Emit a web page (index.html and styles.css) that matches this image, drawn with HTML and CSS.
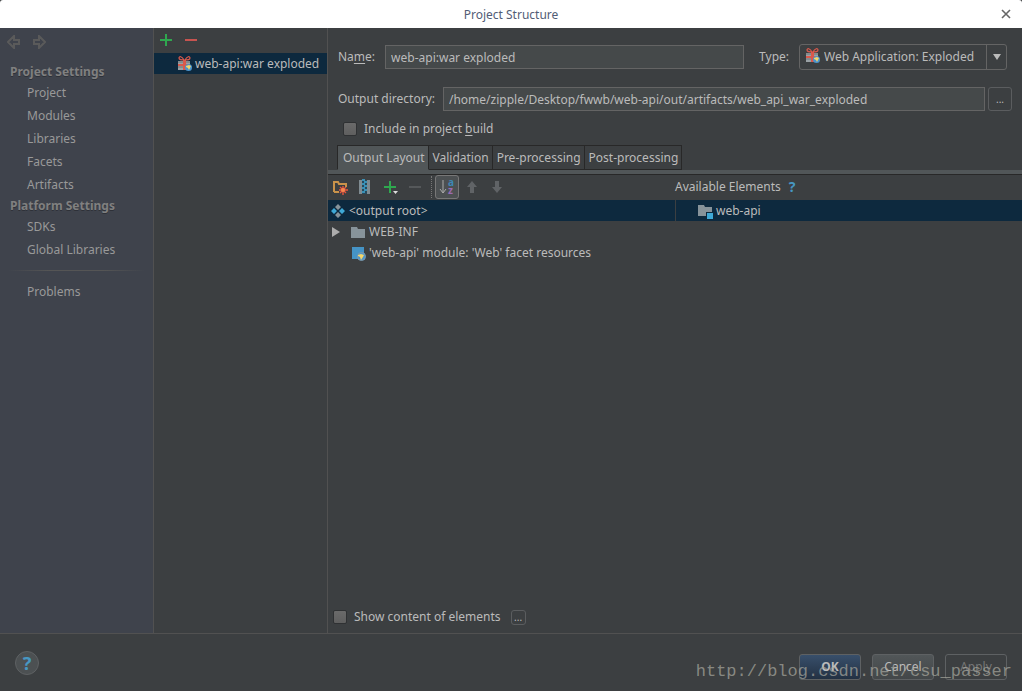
FILE: index.html
```
<!DOCTYPE html>
<html lang="en">
<head>
    <meta charset="UTF-8">
    <meta name="viewport" content="width=device-width, initial-scale=1.0">
    <title>Project Structure</title>
    <link rel="stylesheet" href="styles.css">
</head>
<body>
    <!-- shared icons -->
    <svg class="sprite" width="0" height="0" aria-hidden="true">
        <symbol id="icon-artifact" viewBox="0 0 16 16">
            <path d="M1 5h5v4H1zM9 5h4v4H9zM1 10h5v4H1z" fill="#9aa1a5"/>
            <path d="M1 6h12M1 11h6" stroke="#6e7477"/>
            <path d="M6 4h3v10H6zM1 8h12v2H1z" fill="#d9594c"/>
            <path d="M7 4C5 0 2 0 2 2s2 2 5 2zM8 4c2-4 5-4 5-2s-2 2-5 2z" fill="none" stroke="#d9594c" stroke-width="1.2"/>
            <circle cx="11.500" cy="11.500" r="3.500" fill="#4a94cd"/>
            <path d="M9 10l3-1 2 1-1 2-1 2-1-2-2-1z" fill="#f4d56a"/>
        </symbol>
        <symbol id="icon-plus" viewBox="0 0 16 16">
            <path d="M7 2h2v5h5v2H9v5H7V9H2V7h5z" fill="#2fa84f"/>
        </symbol>
    </svg>

    <header class="titlebar">
        <h1>Project Structure</h1>
        <button class="close" aria-label="Close">
            <svg width="10" height="10" viewBox="0 0 10 10"><path d="M1 1l8 8M9 1L1 9" stroke="#666" stroke-width="1.6"/></svg>
        </button>
    </header>

    <div class="content">
        <nav class="sidebar">
            <div class="history">
                <button aria-label="Back"><svg width="14" height="14" viewBox="0 0 14 14"><path d="M7 1L1 7l6 6V9h5V5H7z"/></svg></button>
                <button aria-label="Forward"><svg width="14" height="14" viewBox="0 0 14 14"><path d="M7 1l6 6-6 6V9H2V5h5z"/></svg></button>
            </div>
            <h2>Project Settings</h2>
            <a href="#">Project</a>
            <a href="#">Modules</a>
            <a href="#">Libraries</a>
            <a href="#">Facets</a>
            <a href="#">Artifacts</a>
            <h2>Platform Settings</h2>
            <a href="#">SDKs</a>
            <a href="#">Global Libraries</a>
            <div class="separator"></div>
            <a href="#">Problems</a>
        </nav>

        <section class="artifacts">
            <div class="artifacts-toolbar">
                <button aria-label="Add"><svg width="16" height="16"><use href="#icon-plus"/></svg></button>
                <button aria-label="Remove"><svg width="16" height="16" viewBox="0 0 16 16"><path d="M2 7h12v2H2z" fill="#c75450"/></svg></button>
            </div>
            <ul>
                <li class="artifact selected"><svg width="16" height="16"><use href="#icon-artifact"/></svg>web-api:war exploded</li>
            </ul>
        </section>

        <main class="editor">
            <div class="form-row name-row">
                <label for="name">Na<u>m</u>e:</label>
                <input type="text" id="name" value="web-api:war exploded">
                <label for="type" class="type-label">Type:</label>
                <div class="combo">
                    <svg class="combo-icon" width="16" height="16"><use href="#icon-artifact"/></svg>
                    <select id="type">
                        <option>Web Application: Exploded</option>
                    </select>
                    <span class="combo-arrow"><svg width="8" height="6" viewBox="0 0 8 6"><path d="M0 0h8L4 6z" fill="#bbb"/></svg></span>
                </div>
            </div>
            <div class="form-row dir-row">
                <label for="dir">Output directory:</label>
                <input type="text" id="dir" value="/home/zipple/Desktop/fwwb/web-api/out/artifacts/web_api_war_exploded">
                <button class="more" aria-label="Browse">...</button>
            </div>
            <label class="check build-check"><input type="checkbox"><span>Include in project <u>b</u>uild</span></label>

            <div class="tabs" role="tablist">
                <button role="tab" class="active" aria-selected="true">Output Layout</button>
                <button role="tab">Validation</button>
                <button role="tab">Pre-processing</button>
                <button role="tab">Post-processing</button>
            </div>

            <div class="panes-header">
                <div class="layout-toolbar">
                    <button aria-label="Create directory">
                        <svg width="16" height="16" viewBox="0 0 16 16">
                            <path d="M2 13V3h4l1 2h7v3" fill="none" stroke="#c9924a" stroke-width="2"/>
                            <path d="M2 13h5" stroke="#c9924a" stroke-width="2"/>
                            <path d="M11 7v9M7 11h9M8 8l6 6M14 8l-6 6" stroke="#e8553e" stroke-width="1.4"/>
                            <circle cx="11" cy="11" r="2" fill="#f58a4e"/>
                        </svg>
                    </button>
                    <button aria-label="Create archive">
                        <svg width="16" height="16" viewBox="0 0 16 16">
                            <path d="M2 1h4v14H2zM9 1h4v14H9z" fill="#7f8b91"/>
                            <path d="M5 1h5v14H5z" fill="#28485a"/>
                            <path d="M5 1h3M7 3h3M5 5h3M7 7h3M5 9h3M7 11h3M5 13h3" stroke="#3fa9d6" stroke-width="1.4"/>
                        </svg>
                    </button>
                    <button aria-label="Add copy of">
                        <svg width="16" height="16" viewBox="0 0 16 16">
                            <path d="M7 2h2v5h5v2H9v5H7V9H2V7h5z" fill="#2fa84f"/>
                            <path d="M11 12h5l-2.500 3z" fill="#ddd"/>
                        </svg>
                    </button>
                    <button aria-label="Remove"><svg width="16" height="16" viewBox="0 0 16 16"><path d="M2 7h12v2H2z" fill="#55585a"/></svg></button>
                    <span class="divider"></span>
                    <button class="pressed" aria-label="Sort by names and types">
                        <svg width="16" height="20" viewBox="0 0 16 20">
                            <path d="M4 3v13M1 12l3 4 3-4" fill="none" stroke="#aaa"/>
                            <text x="9" y="9" fill="#3d87b5">a</text>
                            <text x="9" y="17" fill="#9a6bb3">z</text>
                        </svg>
                    </button>
                    <button aria-label="Move up"><svg width="16" height="16" viewBox="0 0 16 16"><path d="M8 2l5 6h-3v6H6V8H3z" fill="#606366"/></svg></button>
                    <button aria-label="Move down"><svg width="16" height="16" viewBox="0 0 16 16"><path d="M8 14l5-6h-3V2H6v6H3z" fill="#606366"/></svg></button>
                </div>
                <div class="available-title">
                    Available Elements
                    <button class="hint">?</button>
                </div>
            </div>

            <div class="panes">
                <ul class="tree">
                    <li class="selected root">
                        <svg width="16" height="16" viewBox="0 0 16 16">
                            <path d="M8 1l3 3-3 3-3-3zM8 9l3 3-3 3-3-3z" fill="#87939a"/>
                            <path d="M4 5l3 3-3 3-3-3zM12 5l3 3-3 3-3-3z" fill="#3fa9d6"/>
                        </svg>
                        &lt;output root&gt;
                    </li>
                    <li class="folder">
                        <button aria-label="Expand"><svg width="8" height="10" viewBox="0 0 8 10"><path d="M0 0l8 5-8 5z" fill="#adadad"/></svg></button>
                        <svg width="16" height="16" viewBox="0 0 16 16"><path d="M1 3h6l1 2h7v9H1z" fill="#87939a"/></svg>
                        WEB-INF
                    </li>
                    <li class="facet">
                        <svg width="16" height="16" viewBox="0 0 16 16">
                            <path d="M2 2h12v12H2z" fill="#4593c5"/>
                            <circle cx="11.500" cy="11.500" r="4" fill="#4a94cd" stroke="#7f98a8"/>
                            <path d="M8 10l3-1 3 1-1 2-2 3-1-3-2-1z" fill="#f4d56a"/>
                        </svg>
                        'web-api' module: 'Web' facet resources
                    </li>
                </ul>
                <ul class="tree available">
                    <li class="selected">
                        <svg width="16" height="16" viewBox="0 0 16 16">
                            <path d="M1 2h6l1 2h7v9H1z" fill="#87939a"/>
                            <path d="M9 9h7v7H9z" fill="#0d293e"/>
                            <path d="M10 10h6v6h-6z" fill="#3fa9d6"/>
                        </svg>
                        web-api
                    </li>
                </ul>
            </div>

            <div class="show-row">
                <label class="check"><input type="checkbox"><span>Show content of elements</span></label>
                <button class="more small" aria-label="Options">...</button>
            </div>
        </main>
    </div>

    <footer class="footer">
        <button class="help">?</button>
        <div class="actions">
            <button class="btn primary">OK</button>
            <button class="btn">Cancel</button>
            <button class="btn" disabled>Apply</button>
        </div>
        <span class="watermark">http://blog.csdn.net/csu_passer</span>
    </footer>
</body>
</html>
```
FILE: styles.css
```
* {
    box-sizing: border-box;
}

body {
    margin: 0;
    height: 100vh;
    display: flex;
    flex-direction: column;
    overflow: hidden;
    background: #3c3f41;
    color: #bbb;
    font-family: "Noto Sans", sans-serif;
    font-size: 12px;
    line-height: 20px;
}

h1,
h2,
ul {
    margin: 0;
    padding: 0;
    list-style: none;
}

button,
input,
select {
    margin: 0;
    padding: 0;
    border: 0;
    background: none;
    color: inherit;
    font: inherit;
}

svg {
    display: block;
    flex: none;
}

u {
    text-underline-offset: 2px;
}

.sprite {
    position: absolute;
}

/* title bar */
.titlebar {
    height: 28px;
    flex: none;
    display: grid;
    grid-template-columns: 1fr auto 1fr;
    align-items: center;
    background: #fff;
    border-radius: 3px 3px 0 0;
}

.titlebar h1 {
    grid-column: 2;
    padding-top: 1px;
    font-size: 12px;
    font-weight: normal;
    color: #525d76;
}

.close {
    justify-self: end;
    padding: 0 11px;
}

.content {
    flex: 1;
    min-height: 0;
    display: flex;
}

/* left navigation */
.sidebar {
    width: 154px;
    flex: none;
    border-right: 1px solid #515151;
    background: #3f434c;
    color: #999;
}

.history {
    height: 34px;
    padding: 7px 7px 0;
    display: flex;
    gap: 11px;
    align-items: flex-start;
}

.history path {
    fill: none;
    stroke: #5a5a5a;
    stroke-width: 2;
}

.sidebar h2 {
    padding-left: 10px;
    font-size: 12px;
    line-height: 19px;
    color: #808080;
    text-shadow: 0 1px #2e3138;
}

.sidebar a {
    display: block;
    padding-left: 27px;
    line-height: 23px;
    color: inherit;
    text-decoration: none;
}

.separator {
    height: 1px;
    margin: 9px 8px;
    background: linear-gradient(to right, transparent, #555 30%, #555 70%, transparent);
}

/* artifact list */
.artifacts {
    width: 174px;
    flex: none;
    border-right: 1px solid #515151;
}

.artifacts-toolbar {
    height: 25px;
    padding: 0 4px 1px;
    display: flex;
    align-items: center;
    gap: 9px;
}

.artifact {
    height: 21px;
    padding-left: 23px;
    display: flex;
    align-items: center;
    gap: 2px;
    white-space: nowrap;
}

.selected {
    background: #0d293e;
}

/* artifact editor */
.editor {
    flex: 1;
    min-width: 0;
    display: flex;
    flex-direction: column;
}

.form-row {
    display: flex;
    align-items: center;
    padding-left: 10px;
}

.form-row input {
    flex: 1;
    min-width: 0;
    height: 24px;
    padding: 0 5px;
    border: 1px solid #646464;
    background: #45494a;
}

.name-row {
    margin-top: 16px;
    padding-right: 15px;
    gap: 10px;
}

.type-label {
    margin-left: 5px;
}

.dir-row {
    margin-top: 17px;
    padding-right: 10px;
    gap: 3px;
}

.dir-row label {
    margin-right: 5px;
}

.combo {
    position: relative;
    width: 208px;
}

.combo select {
    appearance: none;
    display: block;
    width: 100%;
    height: 26px;
    padding-left: 24px;
    border: 1px solid #646464;
    border-radius: 3px;
}

.combo-icon {
    position: absolute;
    left: 6px;
    top: 4px;
}

.combo-arrow {
    position: absolute;
    top: 0;
    right: 0;
    bottom: 0;
    width: 21px;
    display: flex;
    align-items: center;
    justify-content: center;
    border-left: 1px solid #646464;
    pointer-events: none;
}

.more {
    width: 24px;
    height: 24px;
    border: 1px solid #5b5d5f;
    border-radius: 3px;
    font-size: 10px;
    line-height: 16px;
}

.more.small {
    width: 15px;
    height: 15px;
    line-height: 10px;
}

.check {
    display: flex;
    align-items: center;
    gap: 7px;
}

.check input {
    appearance: none;
    width: 14px;
    height: 14px;
    border: 1px solid #2f3133;
    border-radius: 2px;
    background: linear-gradient(#6a6a6a, #5f5f5f);
}

.build-check {
    padding: 8px 15px 0;
}

/* tabs */
.tabs {
    margin-top: 6px;
    padding-left: 9px;
    display: flex;
    border-bottom: 4px solid #515658;
    box-shadow: 0 1px #282828;
}

.tabs button {
    height: 25px;
    padding: 1px 3px 0 4px;
    border: 1px solid #282828;
    border-left: 0;
    white-space: nowrap;
}

.tabs .active {
    padding-left: 5px;
    border-left: 1px solid #282828;
    border-bottom-color: #515658;
    background: #515658;
}

/* layout tree and available elements */
.panes-header,
.panes {
    display: grid;
    grid-template-columns: 1fr 1fr;
}

.panes-header {
    height: 26px;
    padding-bottom: 1px;
    align-items: center;
}

.layout-toolbar {
    display: flex;
    align-items: center;
    gap: 9px;
    padding-left: 4px;
}

.divider {
    height: 22px;
    margin-left: -1px;
    border-left: 1px dotted #777;
}

.layout-toolbar .pressed {
    height: 24px;
    margin: 0 -4px 0 -6px;
    padding: 0 3px;
    border: 1px solid #777;
    border-radius: 3px;
    background: #4c5052;
}

.pressed text {
    font-size: 10px;
    font-weight: bold;
}

.available-title {
    display: flex;
    align-items: center;
    gap: 8px;
    padding-top: 1px;
}

.hint,
.help {
    color: #4797c3;
    font-weight: bold;
}

.hint {
    font-size: 14px;
}

.panes {
    flex: 1;
}

.tree li {
    height: 21px;
    display: flex;
    align-items: center;
    gap: 3px;
    white-space: nowrap;
}

.tree .root {
    padding-left: 2px;
}

.tree .folder {
    padding-left: 4px;
}

.folder button {
    margin-right: 7px;
}

.tree .facet {
    padding-left: 22px;
}

.available li {
    padding-left: 21px;
    border-left: 1px solid #3c3f41;
}

.show-row {
    display: flex;
    align-items: center;
    gap: 10px;
    padding: 0 5px 6px;
}

/* bottom bar */
.footer {
    position: relative;
    height: 58px;
    flex: none;
    padding: 0 15px;
    display: flex;
    align-items: center;
    justify-content: space-between;
    border-top: 1px solid #515151;
}

.help {
    width: 24px;
    height: 24px;
    border: 1px solid #5e6163;
    border-radius: 50%;
    background: #4c5052;
    font-size: 18px;
}

.actions {
    display: flex;
    gap: 11px;
    padding-top: 8px;
}

.btn {
    width: 62px;
    height: 26px;
    border: 1px solid #5e6163;
    border-radius: 3px;
    background: linear-gradient(#515658, #434749);
}

.btn.primary {
    background: linear-gradient(#384f6b, #233143);
    font-weight: bold;
}

.btn:disabled {
    background: none;
    color: #777;
}

.watermark {
    position: absolute;
    right: 10px;
    bottom: 9px;
    font-family: "Liberation Mono", monospace;
    font-size: 17px;
    color: rgba(170, 170, 160, 0.7);
    pointer-events: none;
}
```
